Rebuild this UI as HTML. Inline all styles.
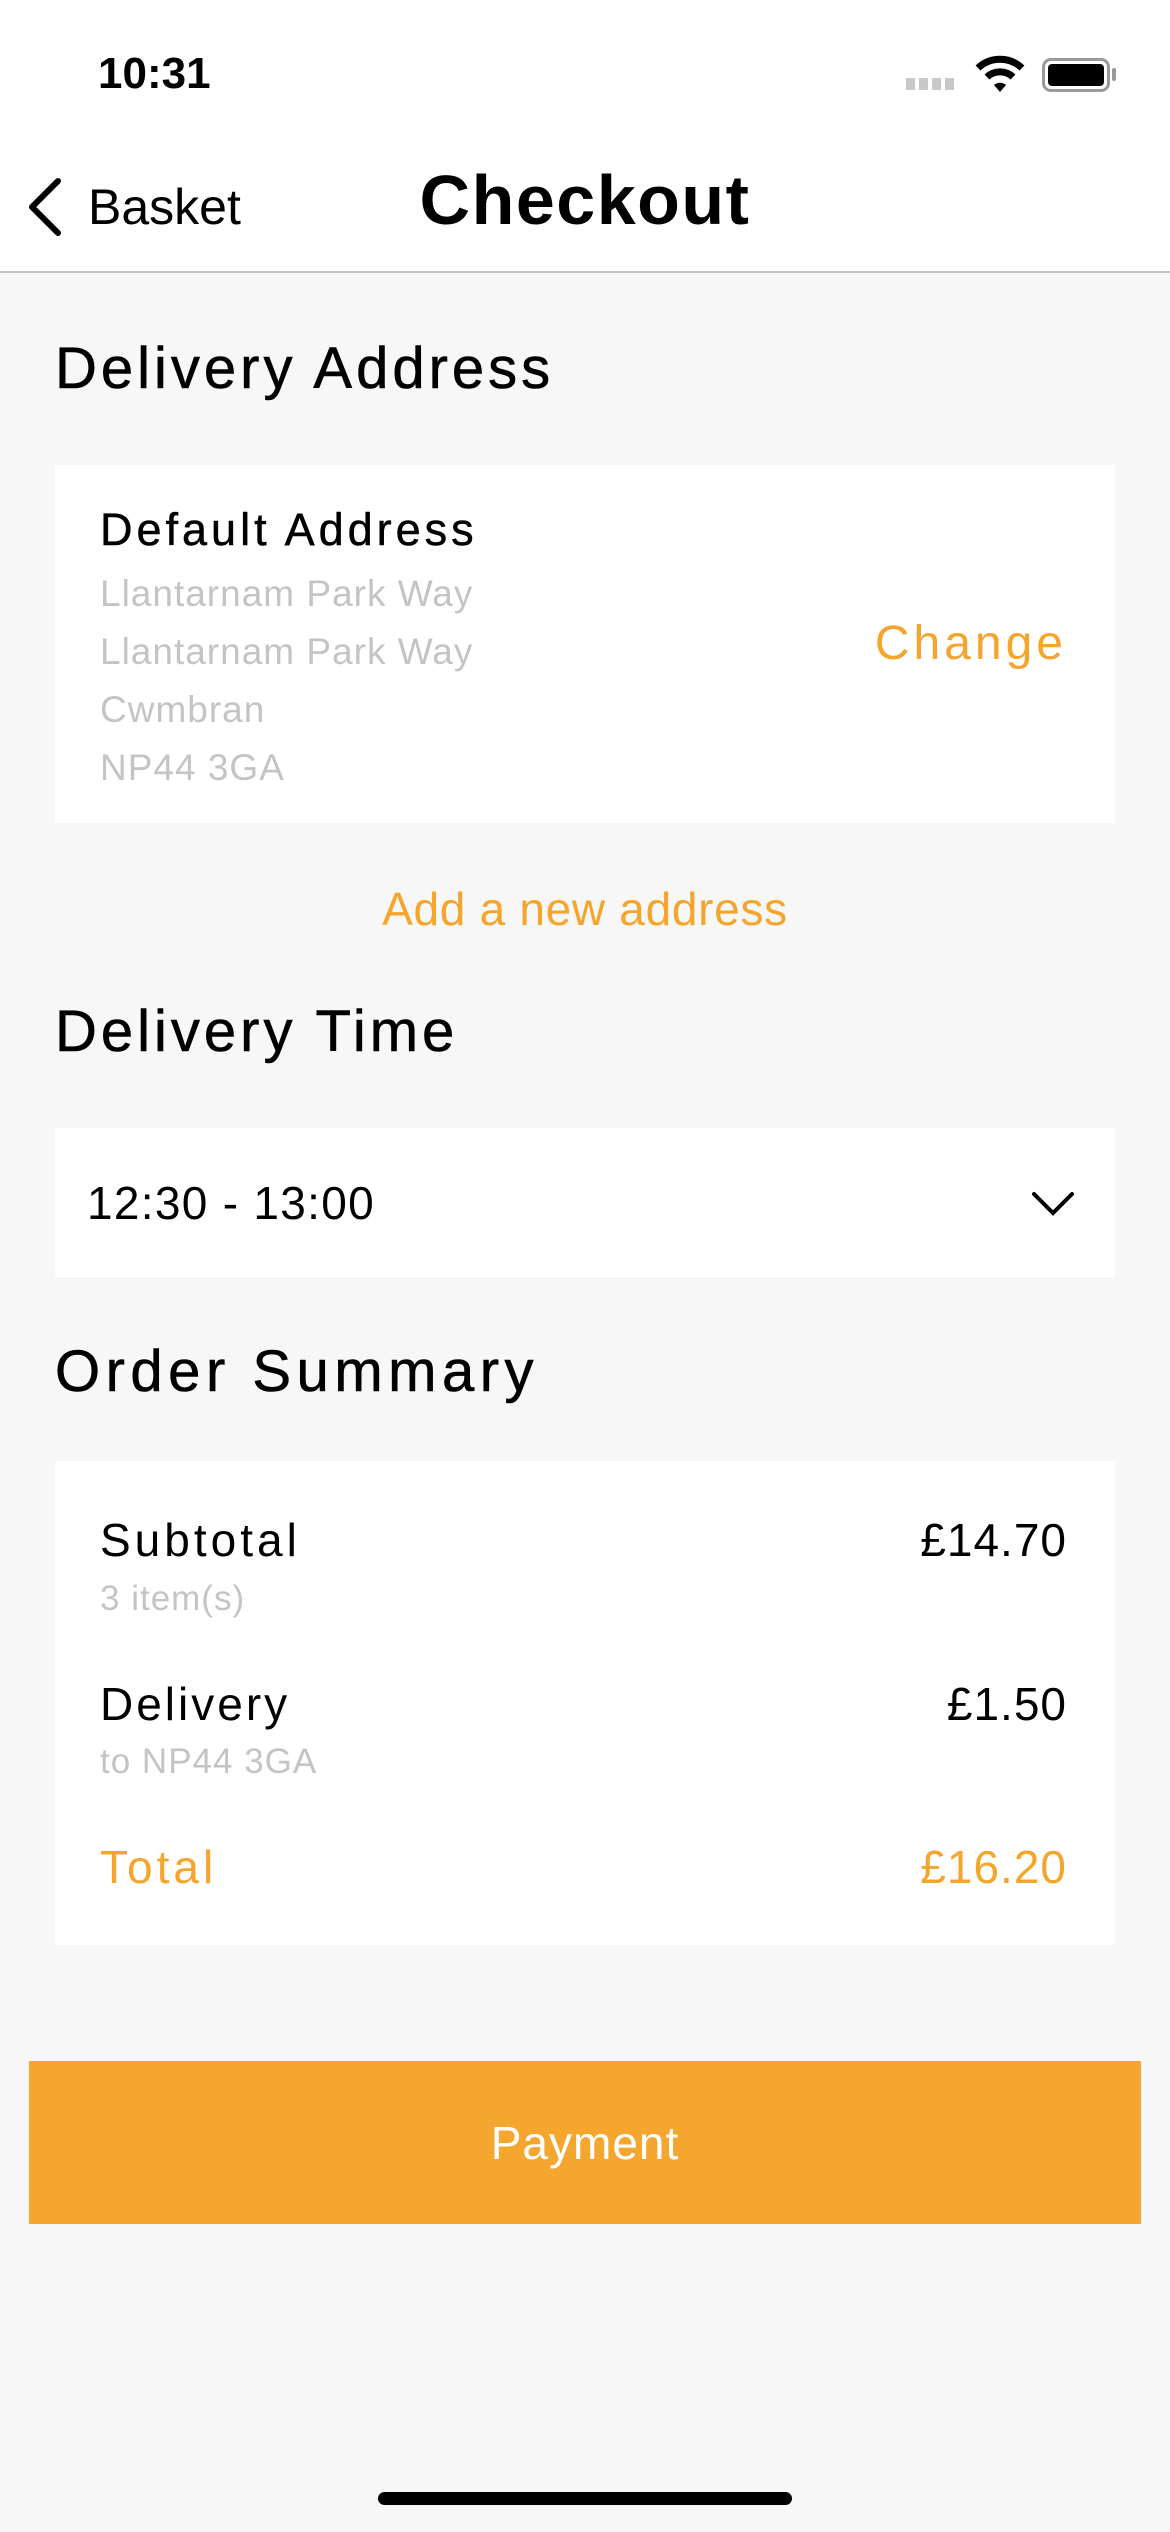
<!DOCTYPE html>
<html><head><meta charset="utf-8"><style>
*{margin:0;padding:0;box-sizing:border-box}
body{width:1170px;height:2532px;background:#f7f7f7;font-family:"Liberation Sans",sans-serif;position:relative;overflow:hidden;color:#000}
.a{position:absolute;white-space:nowrap;line-height:1}
.top{position:absolute;left:0;top:0;width:1170px;height:273px;background:#fff;border-bottom:2px solid #c4c4c4}
.card{position:absolute;left:55px;width:1060px;background:#fff}
.h{font-size:58px;left:55px;letter-spacing:4px;-webkit-text-stroke:0.6px #000}
.g{color:#c4c4c4;font-size:37px;left:100px;letter-spacing:1px}
.o{color:#f5a52c}
</style></head><body>
<div class="top"></div>
<div class="a" style="left:98px;top:52px;font-size:44px;font-weight:bold">10:31</div>
<div class="a" style="left:906px;top:78px;width:48px;height:12px;background:repeating-linear-gradient(90deg,#c8c8c8 0 9px,transparent 9px 13px)"></div>
<svg class="a" style="left:974px;top:52px" width="52" height="42" viewBox="0 0 52 42"><path d="M4 16 A32 32 0 0 1 48 16" stroke="#000" stroke-width="7" fill="none"/><path d="M13 25 A19 19 0 0 1 39 25" stroke="#000" stroke-width="7" fill="none"/><path d="M20 33 L26 40 L32 33 A9 9 0 0 0 20 33Z" fill="#000"/></svg>
<div class="a" style="left:1042px;top:58px;width:68px;height:34px;border:3px solid #999;border-radius:9px;padding:3px"><div style="width:100%;height:100%;background:#000;border-radius:4px"></div></div>
<div class="a" style="left:1112px;top:68px;width:4px;height:13px;background:#999;border-radius:2px"></div>
<svg class="a" style="left:24px;top:176px" width="40" height="62" viewBox="0 0 40 62"><path d="M34 5 L8 31 L34 57" stroke="#000" stroke-width="6" fill="none" stroke-linecap="round" stroke-linejoin="round"/></svg>
<div class="a" style="left:88px;top:182px;font-size:50px">Basket</div>
<div class="a" style="left:0;width:1170px;text-align:center;top:165px;font-size:70px;font-weight:bold;letter-spacing:1.5px">Checkout</div>
<div class="a h" style="top:340px">Delivery Address</div>
<div class="card" style="top:465px;height:358px"></div>
<div class="a" style="left:100px;top:507px;font-size:45px;letter-spacing:4px;-webkit-text-stroke:0.5px #000">Default Address</div>
<div class="a g" style="top:575px">Llantarnam Park Way</div>
<div class="a g" style="top:633px">Llantarnam Park Way</div>
<div class="a g" style="top:691px">Cwmbran</div>
<div class="a g" style="top:749px">NP44 3GA</div>
<div class="a o" style="right:103px;top:620px;font-size:48px;letter-spacing:4px">Change</div>
<div class="a o" style="left:0;width:1170px;text-align:center;top:886px;font-size:46px;letter-spacing:.7px">Add a new address</div>
<div class="a h" style="top:1003px">Delivery Time</div>
<div class="card" style="top:1128px;height:149px"></div>
<div class="a" style="left:87px;top:1180px;font-size:46px;letter-spacing:1.3px">12:30 - 13:00</div>
<svg class="a" style="left:1030px;top:1190px" width="46" height="28" viewBox="0 0 46 28"><path d="M4 4 L23 23 L42 4" stroke="#000" stroke-width="4" fill="none" stroke-linecap="round"/></svg>
<div class="a h" style="top:1343px;letter-spacing:5.5px">Order Summary</div>
<div class="card" style="top:1461px;height:484px"></div>
<div class="a" style="left:100px;top:1517px;font-size:46px;letter-spacing:4px">Subtotal</div>
<div class="a" style="right:103px;top:1517px;font-size:46px;letter-spacing:1px">£14.70</div>
<div class="a g" style="top:1581px;font-size:35px">3 item(s)</div>
<div class="a" style="left:100px;top:1681px;font-size:46px;letter-spacing:3px">Delivery</div>
<div class="a" style="right:103px;top:1681px;font-size:46px;letter-spacing:1px">£1.50</div>
<div class="a g" style="top:1744px;font-size:35px">to NP44 3GA</div>
<div class="a o" style="left:100px;top:1844px;font-size:46px;letter-spacing:4px">Total</div>
<div class="a o" style="right:103px;top:1844px;font-size:46px;letter-spacing:1px">£16.20</div>
<div class="a" style="left:29px;top:2061px;width:1112px;height:163px;background:#f5a62e"></div>
<div class="a" style="left:0;width:1170px;text-align:center;top:2120px;font-size:46px;color:#fff;letter-spacing:1px">Payment</div>
<div class="a" style="left:378px;top:2492px;width:414px;height:13px;background:#000;border-radius:7px"></div>
</body></html>
